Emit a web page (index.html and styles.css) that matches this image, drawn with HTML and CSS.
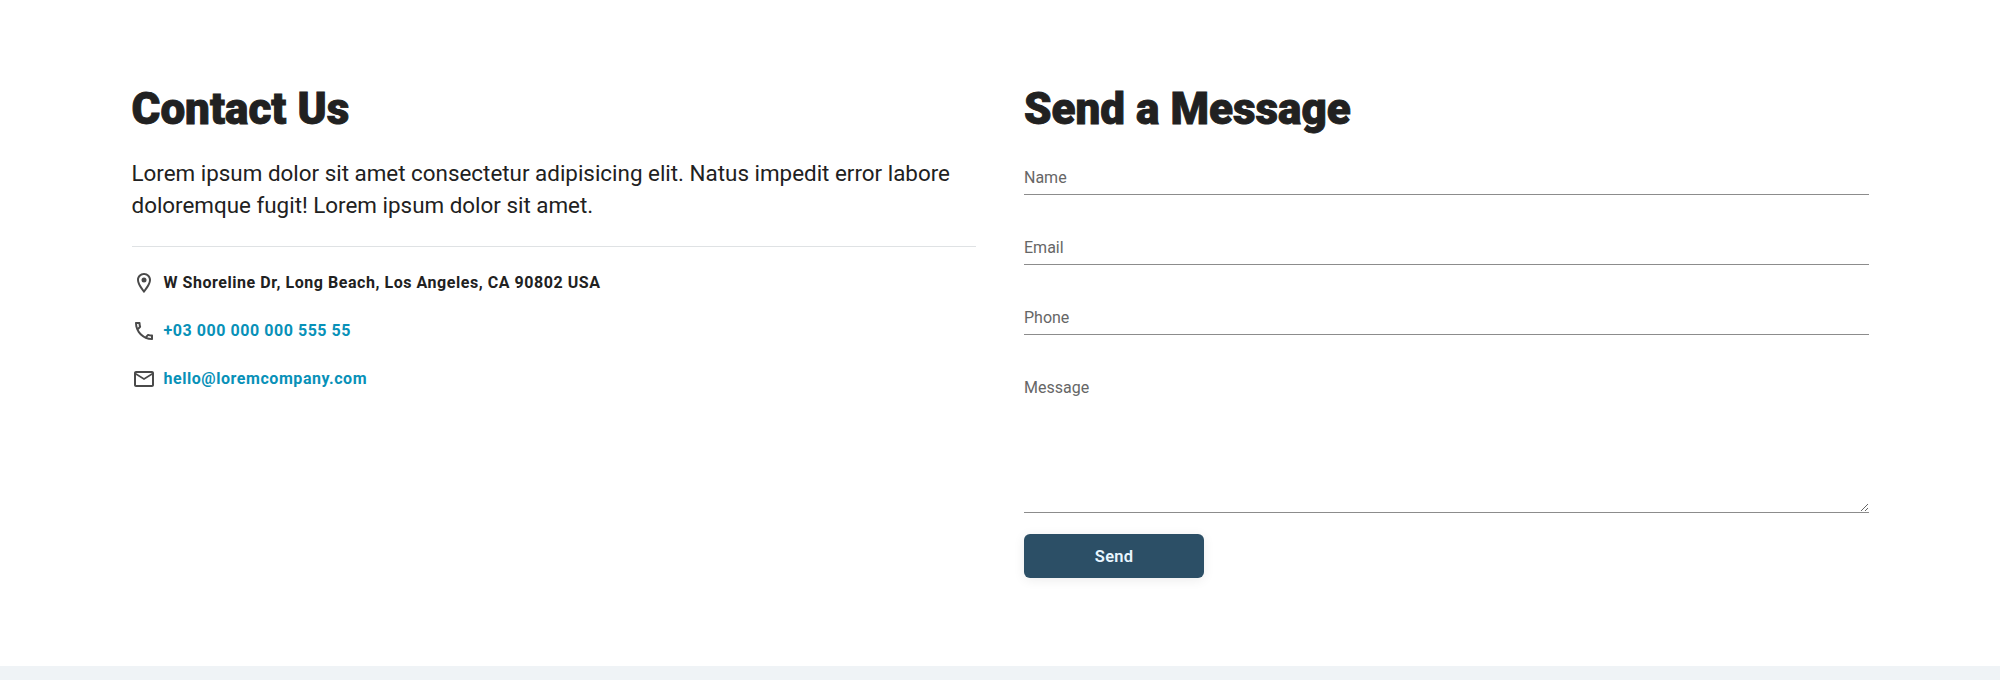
FILE: index.html
```html
<!DOCTYPE html>
<html lang="en">
<head>
<meta charset="utf-8">
<title>Contact Us</title>
<link rel="stylesheet" href="styles.css">
</head>
<body>
<main class="contact">
  <section class="info">
    <h2 class="title">Contact Us</h2>
    <p class="lead">Lorem ipsum dolor sit amet consectetur adipisicing elit. Natus impedit error labore doloremque fugit! Lorem ipsum dolor sit amet.</p>
    <ul class="details">
      <li class="detail">
        <svg class="icon" viewBox="0 0 24 24"><path d="M12 2C8.13 2 5 5.13 5 9c0 5.25 7 13 7 13s7-7.750 7-13c0-3.870-3.130-7-7-7zM7 9c0-2.760 2.240-5 5-5s5 2.240 5 5c0 2.880-2.880 7.190-5 9.880C9.920 16.210 7 11.850 7 9z"/><circle cx="12" cy="9" r="2.500"/></svg>
        <span class="text">W Shoreline Dr, Long Beach, Los Angeles, CA 90802 USA</span>
      </li>
      <li class="detail">
        <svg class="icon" viewBox="0 0 24 24"><path d="M6.540 5c.06.890.210 1.760.450 2.590l-1.200 1.200c-.410-1.200-.670-2.470-.760-3.790h1.510m9.860 12.020c.850.240 1.720.390 2.600.450v1.490c-1.320-.09-2.590-.350-3.800-.750l1.200-1.190M7.500 3H4c-.550 0-1 .450-1 1 0 9.390 7.610 17 17 17 .550 0 1-.450 1-1v-3.490c0-.550-.450-1-1-1-1.240 0-2.450-.2-3.570-.570-.1-.04-.210-.05-.310-.05-.260 0-.510.1-.710.290l-2.200 2.200c-2.830-1.450-5.150-3.760-6.590-6.590l2.200-2.200c.280-.280.360-.670.250-1.020C8.700 6.450 8.500 5.250 8.500 4c0-.550-.450-1-1-1z"/></svg>
        <a class="text link" href="#">+03 000 000 000 555 55</a>
      </li>
      <li class="detail">
        <svg class="icon" viewBox="0 0 24 24"><path d="M22 6c0-1.100-.9-2-2-2H4c-1.100 0-2 .9-2 2v12c0 1.100.9 2 2 2h16c1.100 0 2-.9 2-2V6zm-2 0l-8 5-8-5h16zm0 12H4V8l8 5 8-5v10z"/></svg>
        <a class="text link" href="#">hello@loremcompany.com</a>
      </li>
    </ul>
  </section>
  <section class="message">
    <h2 class="title">Send a Message</h2>
    <form class="form">
      <input class="field" type="text" placeholder="Name">
      <input class="field" type="email" placeholder="Email">
      <input class="field" type="tel" placeholder="Phone">
      <textarea class="field area" placeholder="Message"></textarea>
      <button class="send" type="button">Send</button>
    </form>
  </section>
</main>
<footer class="footer"></footer>
</body>
</html>
```
FILE: styles.css
```css
* { box-sizing: border-box; margin: 0; padding: 0; }
body {
  height: 680px;
  overflow: hidden;
  background: #fff;
  color: #212121;
  font-family: Roboto, sans-serif;
}
.contact {
  display: grid;
  grid-template-columns: 1fr 1fr;
  gap: 48px;
  height: 666px;
  padding: 81px 131.5px 0;
}
.title {
  font-size: 44px;
  line-height: 56px;
  font-weight: 900;
  -webkit-text-stroke: 0.9px #212121;
}
.lead {
  margin-top: 20px;
  padding-bottom: 25px;
  border-bottom: 1px solid #dfe2e4;
  font-size: 22.4px;
  line-height: 32px;
}
.details { list-style: none; padding-top: 24px; }
.detail {
  display: flex;
  align-items: center;
  gap: 8px;
  height: 24px;
  margin-bottom: 24px;
  font-size: 16px;
  font-weight: 700;
  letter-spacing: 0.55px;
}
.icon { width: 24px; height: 24px; fill: #4a4a4a; }
.text { padding-bottom: 2px; }
.link { color: #0891b8; text-decoration: none; }
.form { display: flex; flex-direction: column; align-items: flex-start; padding-top: 18px; }
.field {
  display: block;
  width: 100%;
  height: 40px;
  margin-bottom: 30px;
  padding-top: 6px;
  border: 0;
  border-bottom: 1px solid #8c8c8c;
  outline: 0;
  background: transparent;
  font: 400 16px/24px Roboto, sans-serif;
}
.field::placeholder { color: #666; opacity: 1; }
.area { height: 148px; margin-bottom: 21px; padding-top: 11px; resize: vertical; }
.send {
  width: 180px;
  height: 44px;
  border: 0;
  border-radius: 6px;
  background: #2c4f66;
  box-shadow: 0 2px 12px rgba(0, 0, 0, 0.08);
  color: #e8f6ff;
  font: 600 16.5px Roboto, sans-serif;
  letter-spacing: 0.2px;
}
.footer { height: 14px; background: #eff3f6; }
```
